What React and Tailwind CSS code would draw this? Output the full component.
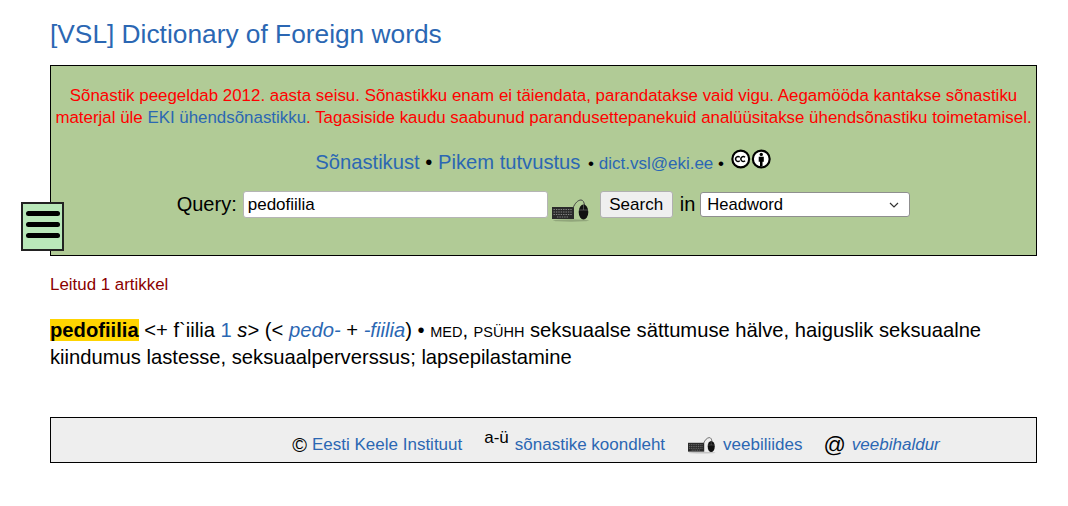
const font = "font-['Liberation_Sans',Arial,sans-serif]";

function KeyboardMouse({ className }) {
  return (
    <svg viewBox="0 0 38 24" className={className}>
      <rect x="0" y="9" width="22" height="12" fill="#2a2a2a" />
      <path d="M1.5 11.5h19M1.5 14h19M1.5 16.5h19M5 19h12" stroke="#9a9a9a" strokeWidth="0.8" strokeDasharray="1.4 1" />
      <path d="M21 10c2-5 5-8 8-8 2 0 3 2 3.5 5" fill="none" stroke="#444" strokeWidth="1" />
      <ellipse cx="31.5" cy="14" rx="4.8" ry="7.5" fill="#111" />
      <path d="M31.5 7v5M27 12h9" stroke="#777" strokeWidth="0.6" />
      <ellipse cx="19" cy="22.5" rx="18" ry="1.2" fill="#000" opacity="0.18" />
    </svg>
  );
}

function CcBadges() {
  return (
    <svg viewBox="0 0 42 20" className="inline-block w-[41px] h-[20px] align-[0px] ml-[2px]">
      <circle cx="10" cy="10" r="8.6" fill="#fff" stroke="#000" strokeWidth="2.2" />
      <path d="M9 8.2a2.5 2.5 0 1 0 0 3.6M14.4 8.2a2.5 2.5 0 1 0 0 3.6" fill="none" stroke="#000" strokeWidth="1.4" />
      <circle cx="31" cy="10" r="8.6" fill="#fff" stroke="#000" strokeWidth="2.2" />
      <circle cx="31" cy="5.3" r="1.7" fill="#000" />
      <path d="M28.4 7.8h5.2v5h-1.3v4.6h-2.6v-4.6h-1.3z" fill="#000" />
    </svg>
  );
}

export default function App() {
  return (
    <div className={`${font} relative min-h-[506px] bg-white text-black pl-[50px] pr-[31px] pt-[17px]`}>
      <h1 className="text-[26.3px] leading-[34px] text-[#2b67b3] mb-[14px]">[VSL] Dictionary of Foreign words</h1>

      <div className="h-[191px] border border-black bg-[#b1cb96] pt-[19px] text-center">
        <p className="text-[16.9px] leading-[22px] text-[#ff0000] whitespace-nowrap">
          Sõnastik peegeldab 2012. aasta seisu. Sõnastikku enam ei täiendata, parandatakse vaid vigu. Aegamööda kantakse sõnastiku
          <br />
          materjal üle <a className="text-[#2b67b3]">EKI ühendsõnastikku</a>. Tagasiside kaudu saabunud parandusettepanekuid analüüsitakse ühendsõnastiku toimetamisel.
        </p>

        <div className="mt-[18px] h-[30px] text-[20.2px] leading-[30px]">
          <a className="text-[#2b67b3]">Sõnastikust</a> • <a className="text-[#2b67b3]">Pikem tutvustus</a>{" "}
          <span className="text-[17px] ml-[2px]">• <a className="text-[#2b67b3]">dict.vsl@eki.ee</a> • </span>
          <CcBadges />
        </div>

        <div className="mt-[14px] flex items-start justify-center">
          <span className="text-[20px] leading-[26px] mr-[6px]">Query:</span>
          <input
            readOnly
            value="pedofiilia"
            className="w-[305px] h-[27px] rounded-[3px] border border-[#b5b5b5] bg-white px-[4px] text-[17px] text-black outline-none"
          />
          <KeyboardMouse className="w-[38px] h-6 mt-[7px] ml-[4px]" />
          <button className="ml-[10px] h-[27px] w-[73px] rounded-[3px] border border-[#b0b0b0] bg-[#efefef] text-[17px] text-black">
            Search
          </button>
          <span className="text-[20px] leading-[26px] ml-[7px] mr-[5px]">in</span>
          <div className="w-[210px] h-[25px] mt-px pt-px rounded-[3px] border border-[#8f8f8f] bg-white pl-[6px] pr-[10px] flex items-center justify-between text-[16.6px]">
            <span>Headword</span>
            <svg viewBox="0 0 10 6" className="w-[10px] h-[6px]">
              <path d="M1 1l4 4 4-4" fill="none" stroke="#333" strokeWidth="1.2" />
            </svg>
          </div>
        </div>
      </div>

      {/* menu button sits over the panel edge */}
      <button className="absolute left-[21px] top-[202px] w-[43px] h-[49px] border-2 border-[#222] bg-[#b9e8b9] flex flex-col items-center justify-center gap-[6px] pb-[5px]">
        <span className="w-[34px] h-[5px] rounded-full bg-black" />
        <span className="w-[34px] h-[5px] rounded-full bg-black" />
        <span className="w-[34px] h-[5px] rounded-full bg-black" />
      </button>

      <p className="mt-[19px] text-[16.9px] leading-[20px] text-[#8b0000]">Leitud 1 artikkel</p>

      <p className="mt-[22px] text-[20.2px] leading-[27px] whitespace-nowrap">
        <b className="bg-[#ffd400]">pedofiilia</b> &lt;+ f`iilia <a className="text-[#2b67b3]">1</a> <i>s</i>&gt; (&lt;{" "}
        <i className="text-[#2b67b3]">pedo-</i> + <i className="text-[#2b67b3]">-fiilia</i>) •{" "}
        <span className="text-[14.5px] leading-none">MED</span>, <span className="text-[14.5px] leading-none">PSÜHH</span> seksuaalse sättumuse hälve, haiguslik seksuaalne
        <br />
        kiindumus lastesse, seksuaalperverssus; lapsepilastamine
      </p>

      <div className="mt-[46px] h-[46px] border border-black bg-[#eeeeee] flex items-center justify-center pt-[10px] pl-[145px] text-[17px] text-[#2b67b3] whitespace-nowrap">
        <span className="text-black text-[20px] mr-[5px]">©</span>
        <a>Eesti Keele Instituut</a>
        <span className="text-black text-[17px] ml-[22px] mr-[6px] mb-[14px]">a-ü</span>
        <a>sõnastike koondleht</a>
        <KeyboardMouse className="w-[28px] h-[18px] ml-[23px] mr-[7px]" />
        <a>veebiliides</a>
        <span className="text-black text-[22px] ml-[21px] mr-[6px] leading-none">@</span>
        <i>veebihaldur</i>
      </div>
    </div>
  );
}
